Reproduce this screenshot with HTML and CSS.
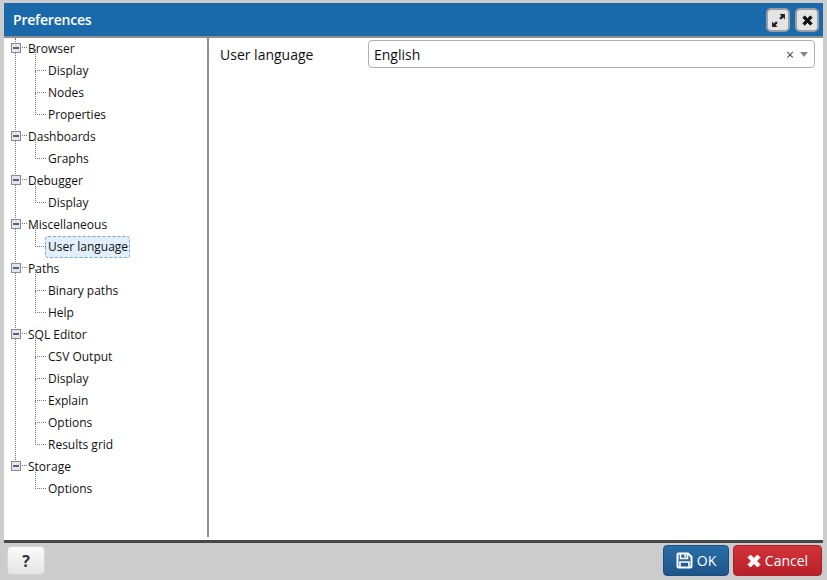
FILE: index.html
```html
<!DOCTYPE html>
<html lang="en">
<head>
  <meta charset="UTF-8">
  <title>Preferences</title>
  <link rel="stylesheet" href="styles.css">
</head>
<body>

<div class="dialog">
  <div class="title-bar">
    <span class="title">Preferences</span>
    <button class="tool-button" aria-label="Maximize">
      <svg width="15" height="15" viewBox="0 0 14 14"><path d="M8 1h5v5l-1.700-1.700-2 2-1.600-1.600 2-2zM6 13H1V8l1.700 1.700 2-2 1.600 1.600-2 2z" fill="#222"/></svg>
    </button>
    <button class="tool-button" aria-label="Close">
      <svg width="11" height="11" viewBox="0 0 14 14"><path d="M1 3.500 3.500 1 7 4.500 10.500 1 13 3.500 9.500 7 13 10.500 10.500 13 7 9.500 3.500 13 1 10.500 4.500 7z" fill="#111" stroke="#111" stroke-linejoin="round"/></svg>
    </button>
  </div>

  <div class="main">
    <div class="tree-panel">
      <ul class="tree">
        <li class="group"><div class="node"><span class="toggle"></span>Browser</div>
          <ul>
            <li><span class="leaf">Display</span></li>
            <li><span class="leaf">Nodes</span></li>
            <li><span class="leaf">Properties</span></li>
          </ul>
        </li>
        <li class="group"><div class="node"><span class="toggle"></span>Dashboards</div>
          <ul>
            <li><span class="leaf">Graphs</span></li>
          </ul>
        </li>
        <li class="group"><div class="node"><span class="toggle"></span>Debugger</div>
          <ul>
            <li><span class="leaf">Display</span></li>
          </ul>
        </li>
        <li class="group"><div class="node"><span class="toggle"></span>Miscellaneous</div>
          <ul>
            <li><span class="leaf selected">User language</span></li>
          </ul>
        </li>
        <li class="group"><div class="node"><span class="toggle"></span>Paths</div>
          <ul>
            <li><span class="leaf">Binary paths</span></li>
            <li><span class="leaf">Help</span></li>
          </ul>
        </li>
        <li class="group"><div class="node"><span class="toggle"></span>SQL Editor</div>
          <ul>
            <li><span class="leaf">CSV Output</span></li>
            <li><span class="leaf">Display</span></li>
            <li><span class="leaf">Explain</span></li>
            <li><span class="leaf">Options</span></li>
            <li><span class="leaf">Results grid</span></li>
          </ul>
        </li>
        <li class="group"><div class="node"><span class="toggle"></span>Storage</div>
          <ul>
            <li><span class="leaf">Options</span></li>
          </ul>
        </li>
      </ul>
    </div>

    <div class="content">
      <label class="field-label">User language</label>
      <div class="select-box">
        <span class="select-value">English</span>
        <span class="select-clear">×</span>
        <span class="select-arrow"></span>
      </div>
    </div>
  </div>

  <div class="footer">
    <button class="btn btn-help">?</button>
    <div class="footer-right">
      <button class="btn btn-ok">
        <svg width="17" height="17" viewBox="0 0 17 17" fill="none" stroke="#fff"><path d="M2.500 1.500h9.500l3.500 3.500v9.500a1 1 0 0 1-1 1h-12a1 1 0 0 1-1-1v-12a1 1 0 0 1 1-1z" stroke-width="2"/><path d="M4.500 2v4.500h7V2" stroke-width="1.600"/><path d="M9.200 2.500v3" stroke-width="1.600"/><path d="M4 15v-5h9v5" stroke-width="1.600"/></svg>
        OK
      </button>
      <button class="btn btn-cancel">
        <svg width="14" height="14" viewBox="0 0 14 14"><path d="M1 3.500 3.500 1 7 4.500 10.500 1 13 3.500 9.500 7 13 10.500 10.500 13 7 9.500 3.500 13 1 10.500 4.500 7z" fill="#fff" stroke="#fff" stroke-linejoin="round"/></svg>
        Cancel
      </button>
    </div>
  </div>
</div>

</body>
</html>
```

FILE: styles.css
```css
* {
  box-sizing: border-box;
}
body {
  margin: 0;
  background-color: #cccccc;
  font-family: "Open Sans", sans-serif;
  font-size: 12px;
  color: #111;
}
.dialog {
  width: 827px;
  height: 580px;
  padding: 3px 4px 3px 4px;
  display: flex;
  flex-direction: column;
}
.title-bar {
  height: 33px;
  flex: none;
  background-color: #1a69aa;
  display: flex;
  align-items: center;
  gap: 5px;
  padding: 1px 4px 0 9px;
}
.title {
  flex: 1;
  color: #fff;
  font-size: 14px;
  font-weight: 600;
  letter-spacing: -0.2px;
  margin-top: -1px;
}
.tool-button {
  width: 24px;
  height: 24px;
  padding: 0;
  display: flex;
  align-items: center;
  justify-content: center;
  background-color: #e4e4e4;
  border: 2px solid #9a9ea3;
  border-radius: 5px;
}
.main {
  flex: none;
  height: 504px;
  background: white;
  border-top: 2px solid #8f8f8f;
  padding-bottom: 3px;
  display: flex;
}
.tree-panel {
  width: 205px;
  flex: none;
  border-right: 2px solid #8f8f8f;
}
.tree, .tree ul {
  list-style: none;
  margin: 0;
  padding: 0;
}
.tree {
  position: relative;
}
/* long dotted line joining the top level nodes */
.tree::before {
  content: "";
  position: absolute;
  left: 11px;
  top: 0;
  height: 428px;
  border-left: 1px dotted #777;
}
.group {
  position: relative;
}
.node {
  height: 22px;
  line-height: 21px;
  padding-left: 24px;
  position: relative;
}
.node::before {
  content: "";
  position: absolute;
  left: 16px;
  top: 9px;
  width: 7px;
  border-top: 1px dotted #777;
}
.toggle {
  position: absolute;
  left: 7px;
  top: 5px;
  width: 10px;
  height: 10px;
  background: #e4e6ea;
  border: 1px solid #8a8a8a;
  z-index: 1;
}
.toggle::after {
  content: "";
  position: absolute;
  left: 1px;
  top: 3px;
  width: 6px;
  height: 2px;
  background: #55609a;
}
.group ul li {
  height: 22px;
  padding-left: 41px;
  position: relative;
}
.group ul li::before {
  content: "";
  position: absolute;
  left: 31px;
  top: -11px;
  height: 21px;
  width: 10px;
  border-left: 1px dotted #777;
  border-bottom: 1px dotted #777;
}
.leaf {
  display: inline-block;
  height: 22px;
  padding: 0 1px 0 2px;
  border: 1px solid transparent;
  line-height: 20px;
}
.leaf.selected {
  background-color: #e3eefc;
  border: 1px dashed #7ea8dc;
  border-radius: 3px;
}
.content {
  flex: 1;
  display: flex;
  align-items: flex-start;
  padding: 2px 8px 0 11px;
}
.field-label {
  width: 148px;
  flex: none;
  font-size: 14px;
  line-height: 30px;
}
.select-box {
  flex: 1;
  height: 28px;
  border: 1px solid #b0b0b0;
  border-radius: 4px;
  display: flex;
  align-items: center;
  padding: 0 6px 0 5px;
  font-size: 14px;
}
.select-value {
  flex: 1;
}
.select-clear {
  color: #444;
  font-size: 14px;
  margin-right: 6px;
}
.select-arrow {
  width: 0;
  height: 0;
  border-left: 4px solid transparent;
  border-right: 4px solid transparent;
  border-top: 5px solid #888;
}
.footer {
  flex: 1;
  border-top: 3px solid #484848;
  display: flex;
  align-items: center;
  justify-content: space-between;
  padding: 1px 1px 0 3px;
}
.footer-right {
  display: flex;
  gap: 4px;
}
.btn {
  height: 31px;
  border-radius: 4px;
  font-family: "Open Sans", sans-serif;
  font-size: 14px;
  display: flex;
  align-items: center;
  justify-content: center;
  gap: 4px;
  padding: 0;
  border: 1px solid transparent;
}
.btn-help {
  width: 38px;
  height: 29px;
  background: linear-gradient(#fafafa, #e4e4e4);
  border-color: #d4d4d4;
  color: #333;
  font-size: 16px;
  font-weight: 700;
}
.btn-ok {
  width: 66px;
  color: #fff;
  background: linear-gradient(#2a6fa8, #1c5488);
  border-color: #1b4f80;
}
.btn-cancel {
  width: 89px;
  color: #fff;
  background: linear-gradient(#d2333a, #b9202a);
  border-color: #ab1f27;
}
```
